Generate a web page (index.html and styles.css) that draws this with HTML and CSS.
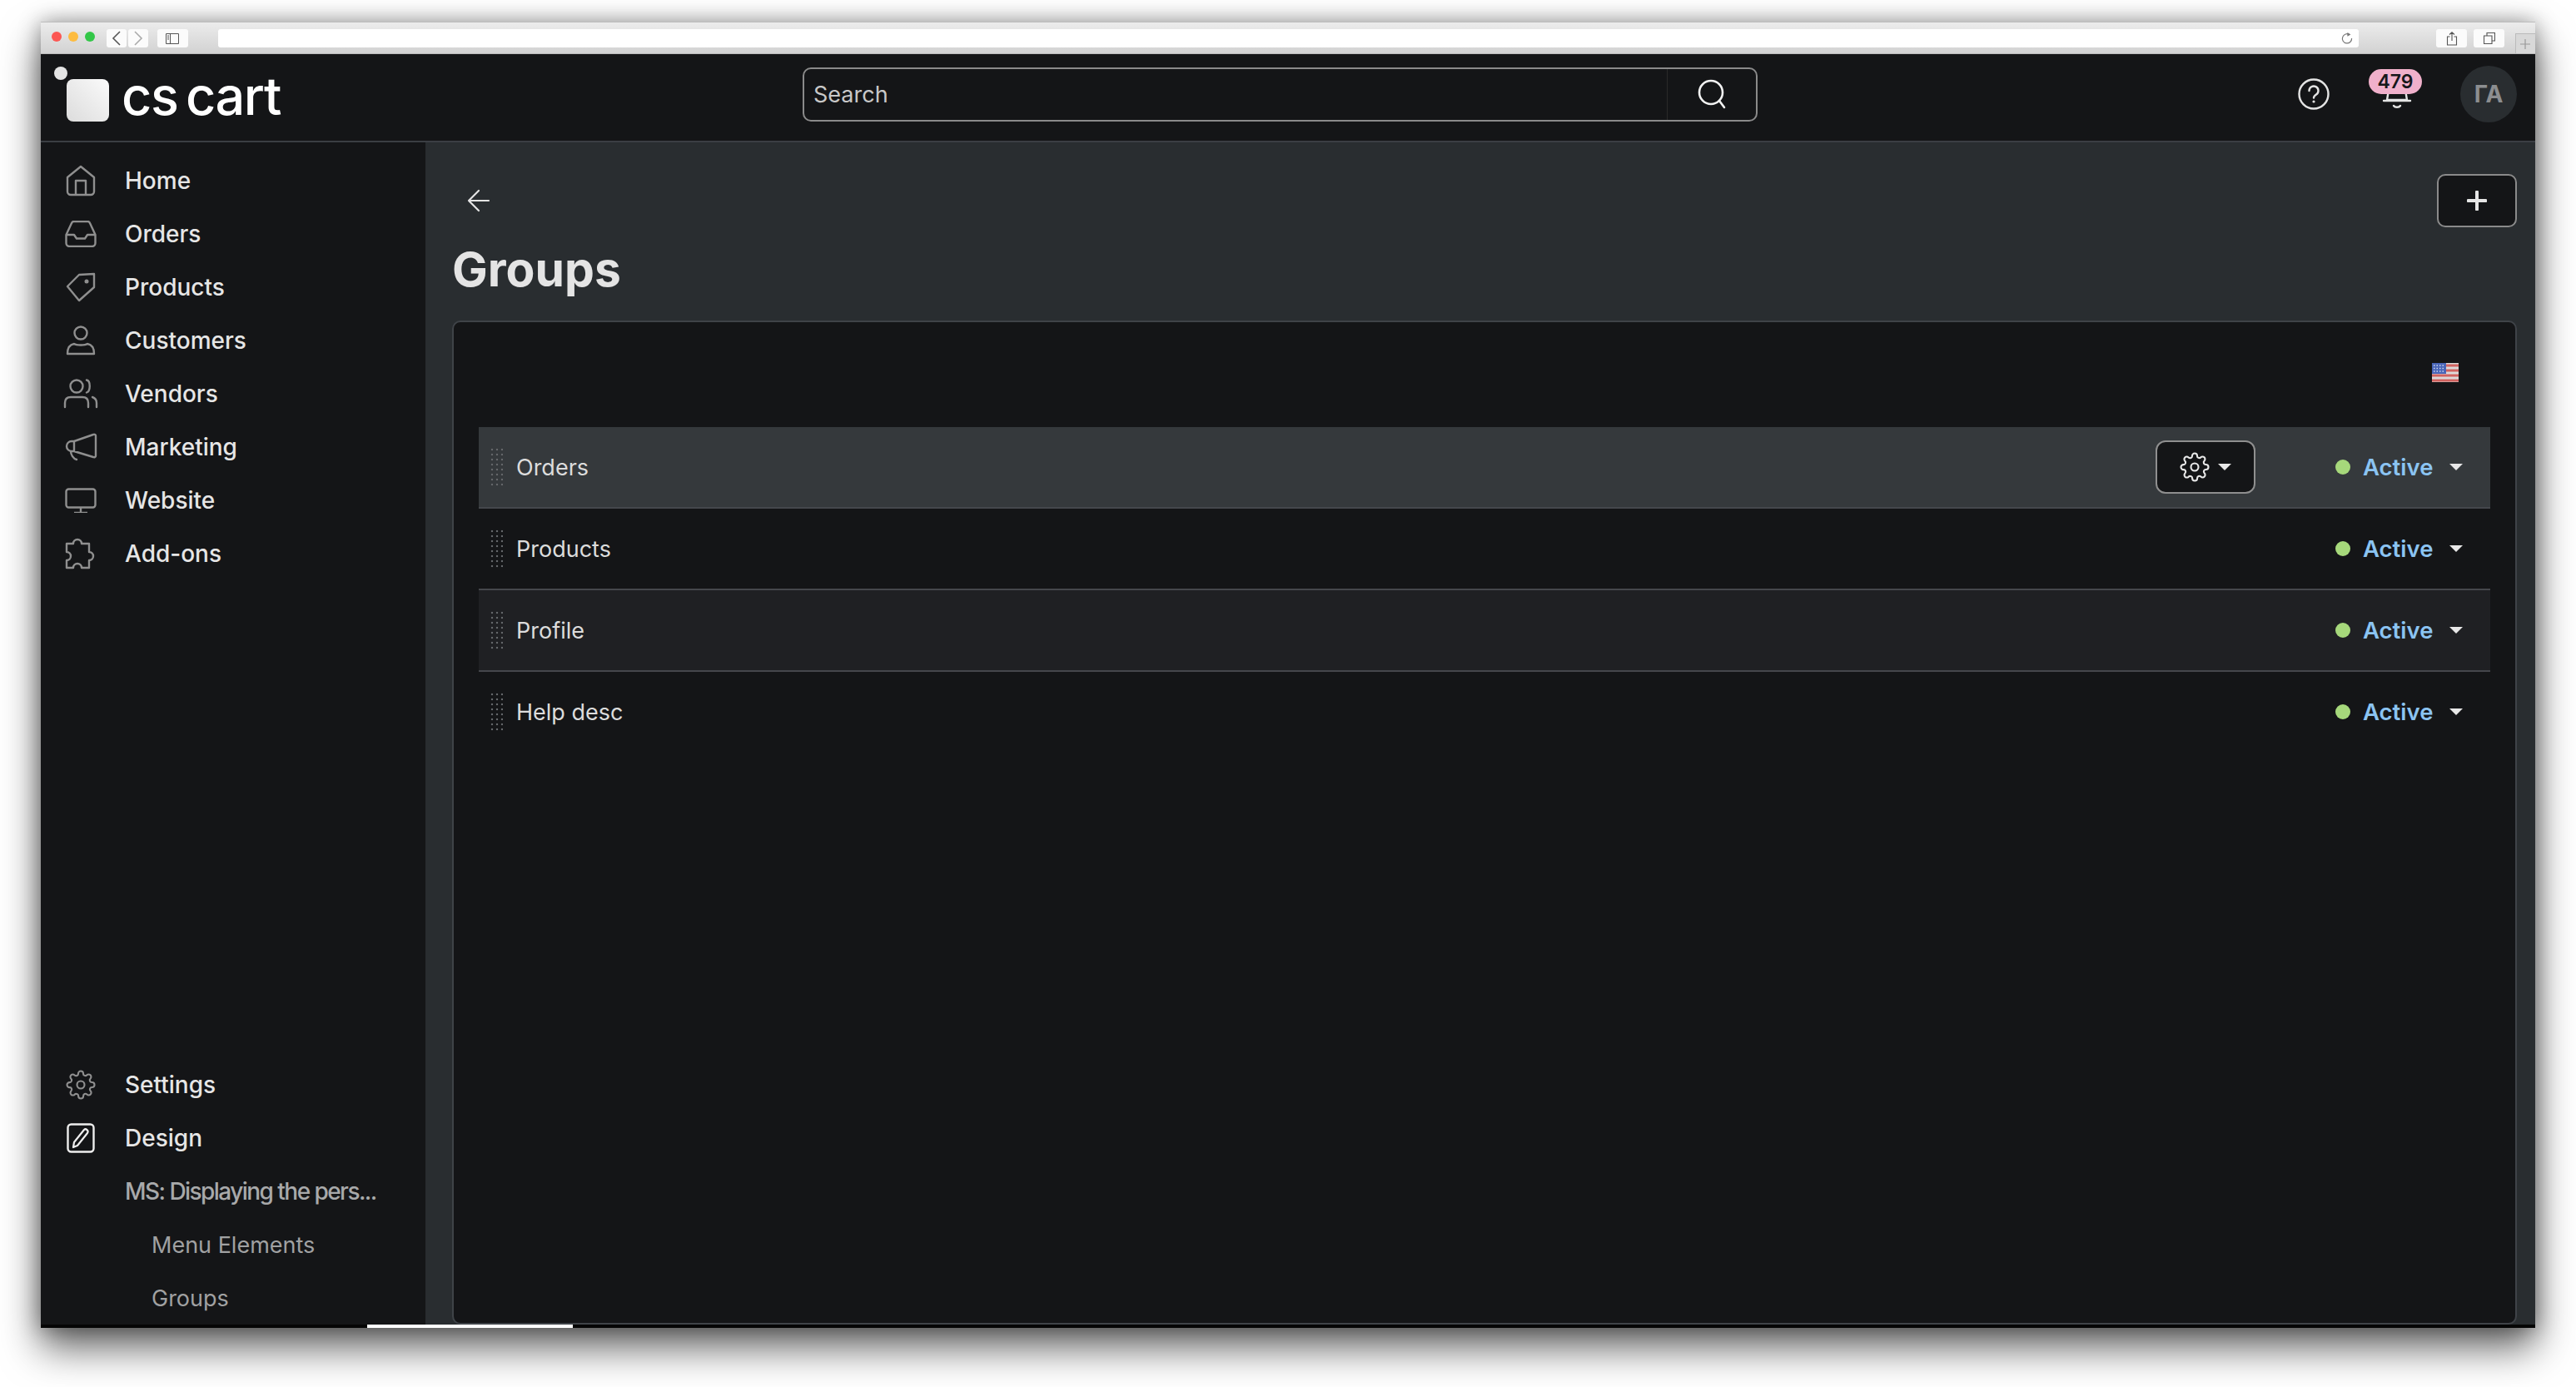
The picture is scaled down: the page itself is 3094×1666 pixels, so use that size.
FILE: index.html
```html
<!DOCTYPE html>
<html lang="en">
<head>
<meta charset="utf-8">
<title>Groups</title>
<link rel="stylesheet" href="styles.css">
</head>
<body>
<div class="window">
  <div class="toolbar">
    <div class="lights"><i class="light red"></i><i class="light yellow"></i><i class="light green"></i></div>
    <div class="navbtns">
      <span class="tbtn nav"><svg width="12" height="20" viewBox="0 0 12 20"><path d="M10 2 2 10l8 8" fill="none" stroke="#555" stroke-width="1.6"/></svg></span>
      <span class="tbtn nav"><svg width="12" height="20" viewBox="0 0 12 20"><path d="M2 2l8 8-8 8" fill="none" stroke="#aaa" stroke-width="1.6"/></svg></span>
    </div>
    <span class="tbtn side"><svg width="16" height="13" viewBox="0 0 16 13"><path d="M.5.5h15v12H.5zM5.5.5v12M2 3h2M2 5h2M2 7h2" fill="none" stroke="#555"/></svg></span>
    <div class="url"><svg width="14" height="14" viewBox="0 0 14 14"><path d="M10 2.6A5.6 5.6 0 1 0 12.6 7" fill="none" stroke="#777" stroke-width="1.2"/><path d="M7.4 0l4 2.6-4 2.2z" fill="#777"/></svg></div>
    <span class="tbtn tool"><svg width="14" height="17" viewBox="0 0 14 17"><path d="M4.5 6H1.500v10h11V6H9.500M7 11V1M4 3.500 7 .8l3 2.700" fill="none" stroke="#555" stroke-width="1.100"/></svg></span>
    <span class="tbtn tool"><svg width="14" height="14" viewBox="0 0 14 14"><path d="M.5 4h9.500v9.500H.5zM4 4V.5h9.500V10H10" fill="none" stroke="#555" stroke-width="1.100"/></svg></span>
    <span class="newtab"><svg width="12" height="12" viewBox="0 0 12 12"><path d="M6 0v12M0 6h12" stroke="#999" stroke-width="1.200"/></svg></span>
  </div>

  <header class="topbar">
    <div class="brand">
      <svg class="logo" width="62" height="62" viewBox="0 0 62 62"><defs><linearGradient id="lg" x1="1" y1="0" x2="0" y2="1"><stop offset="0" stop-color="#fafafa"/><stop offset="1" stop-color="#dcdcdc"/></linearGradient></defs><circle cx="8" cy="8" r="8" fill="#e4e4e4"/><rect x="15" y="15" width="51" height="51" rx="8" fill="url(#lg)"/></svg>
      <span class="wordmark">cs cart</span>
    </div>
    <div class="search">
      <span class="search-text">Search</span>
      <span class="search-btn"><svg width="36" height="36" viewBox="0 0 36 36"><circle cx="17" cy="16" r="14" fill="none" stroke="#f2f2f2" stroke-width="2.600"/><path d="m27 26 6 8" stroke="#f2f2f2" stroke-width="2.600" stroke-linecap="round"/></svg></span>
    </div>
    <div class="top-actions">
      <svg class="help" width="38" height="38" viewBox="0 0 38 38"><circle cx="19" cy="19" r="17.500" fill="none" stroke="#e4e4e4" stroke-width="2.400"/><path d="M13.500 15a5.500 5.500 0 1 1 8.500 4.600c-2 1.300-3 2-3 4" fill="none" stroke="#e4e4e4" stroke-width="2.400" stroke-linecap="round"/><circle cx="19" cy="28" r="1.600" fill="#e4e4e4"/></svg>
      <div class="bell">
        <svg width="36" height="38" viewBox="0 0 36 38"><path d="M9 8 6 26h24L27 8" fill="none" stroke="#e4e4e4" stroke-width="2.400"/><path d="M2 27h32" stroke="#e4e4e4" stroke-width="2.400" stroke-linecap="round"/><path d="M14 33c1.500 2.400 6.500 2.400 8 0" fill="none" stroke="#e4e4e4" stroke-width="2.400" stroke-linecap="round"/></svg>
        <span class="badge">479</span>
      </div>
      <span class="avatar">ГА</span>
    </div>
  </header>

  <div class="body">
    <aside class="sidebar">
      <nav class="nav-list">
        <a class="item"><span class="ico"><svg width="36" height="38" viewBox="0 0 36 38"><path d="M2 15 18 2l16 13v17a4 4 0 0 1-4 4H6a4 4 0 0 1-4-4zM12 36V19h12v17" fill="none" stroke="#8f8f8f" stroke-width="2.400" stroke-linejoin="round"/></svg></span>Home</a>
        <a class="item"><span class="ico"><svg width="38" height="32" viewBox="0 0 38 32"><path d="M1.500 17 8 3a3 3 0 0 1 3-2h16a3 3 0 0 1 3 2l6.500 14v10a4 4 0 0 1-4 4h-27a4 4 0 0 1-4-4z" fill="none" stroke="#8f8f8f" stroke-width="2.400" stroke-linejoin="round"/><path d="M1.500 17H11l3 4.500h10l3-4.500h9.500" fill="none" stroke="#8f8f8f" stroke-width="2.400" stroke-linejoin="round"/></svg></span>Orders</a>
        <a class="item"><span class="ico"><svg width="36" height="36" viewBox="0 0 36 36"><path d="M34 2v16L16 34 2 17 16 3z" fill="none" stroke="#8f8f8f" stroke-width="2.400" stroke-linejoin="round"/><circle cx="25" cy="11" r="2.500" fill="#8f8f8f"/></svg></span>Products</a>
        <a class="item"><span class="ico"><svg width="36" height="36" viewBox="0 0 36 36"><circle cx="18" cy="9" r="7.500" fill="none" stroke="#8f8f8f" stroke-width="2.400"/><path d="M2 34c0-7 2-11 8-12 3 2 13 2 16 0 6 1 8 5 8 12z" fill="none" stroke="#8f8f8f" stroke-width="2.400" stroke-linejoin="round"/></svg></span>Customers</a>
        <a class="item"><span class="ico"><svg width="42" height="36" viewBox="0 0 42 36"><circle cx="16" cy="9" r="7.500" fill="none" stroke="#8f8f8f" stroke-width="2.400"/><path d="M28 1.500c5 1 5 13 0 15M2 34v-5c0-5 3-7 7-7h14c4 0 7 2 7 7v5M35 22c3 1 5 3 5 7v5" fill="none" stroke="#8f8f8f" stroke-width="2.400" stroke-linecap="round"/></svg></span>Vendors</a>
        <a class="item"><span class="ico"><svg width="40" height="34" viewBox="0 0 40 34"><path d="M12 10 35 2a2 2 0 0 1 3 2v23a2 2 0 0 1-3 2L12 22zM12 10H9a6 6 0 0 0 0 12h3M8 22c0 4 3 9 7 10" fill="none" stroke="#8f8f8f" stroke-width="2.400" stroke-linejoin="round" stroke-linecap="round"/></svg></span>Marketing</a>
        <a class="item"><span class="ico"><svg width="38" height="30" viewBox="0 0 38 30"><rect x="1.500" y="1.500" width="35" height="22" rx="3" fill="none" stroke="#8f8f8f" stroke-width="2.400"/><path d="M11 30h16M19 24v6" stroke="#8f8f8f" stroke-width="2.400"/></svg></span>Website</a>
        <a class="item"><span class="ico"><svg width="38" height="38" viewBox="0 0 38 38"><path d="M2 7H10a5 5 0 1 1 10 0H29V17a5 5 0 1 1 0 10V36H20a5 5 0 1 0-10 0H2V27a5 5 0 1 0 0-10z" fill="none" stroke="#8f8f8f" stroke-width="2.400" stroke-linejoin="round"/></svg></span>Add-ons</a>
      </nav>
      <nav class="nav-list">
        <a class="item"><span class="ico"><svg width="36" height="36" viewBox="0 0 24 24" fill="none" stroke="#8f8f8f" stroke-width="1.400" stroke-linejoin="round"><circle cx="12" cy="12" r="3"/><path d="M19.4 15a1.650 1.650 0 0 0 .33 1.820l.06.06a2 2 0 0 1 0 2.830 2 2 0 0 1-2.830 0l-.06-.06a1.650 1.650 0 0 0-1.820-.33 1.650 1.650 0 0 0-1 1.510V21a2 2 0 0 1-2 2 2 2 0 0 1-2-2v-.09A1.650 1.650 0 0 0 9 19.400a1.650 1.650 0 0 0-1.820.33l-.06.06a2 2 0 0 1-2.830 0 2 2 0 0 1 0-2.830l.06-.06a1.650 1.650 0 0 0 .33-1.820 1.650 1.650 0 0 0-1.510-1H3a2 2 0 0 1-2-2 2 2 0 0 1 2-2h.09A1.650 1.650 0 0 0 4.600 9a1.650 1.650 0 0 0-.33-1.820l-.06-.06a2 2 0 0 1 0-2.830 2 2 0 0 1 2.830 0l.06.06a1.650 1.650 0 0 0 1.820.33H9a1.650 1.650 0 0 0 1-1.510V3a2 2 0 0 1 2-2 2 2 0 0 1 2 2v.09a1.650 1.650 0 0 0 1 1.510 1.650 1.650 0 0 0 1.820-.33l.06-.06a2 2 0 0 1 2.830 0 2 2 0 0 1 0 2.830l-.06.06a1.650 1.650 0 0 0-.33 1.820V9a1.650 1.650 0 0 0 1.510 1H21a2 2 0 0 1 2 2 2 2 0 0 1-2 2h-.09a1.650 1.650 0 0 0-1.510 1z"/></svg></span>Settings</a>
        <a class="item"><span class="ico"><svg width="34" height="36" viewBox="0 0 34 36"><rect x="1.500" y="1.500" width="31" height="33" rx="4" fill="none" stroke="#eee" stroke-width="2.400"/><path d="m8 29 1-6L21 8c2-2 6 1 4 4L13 27z" fill="none" stroke="#eee" stroke-width="2.200" stroke-linejoin="round"/></svg></span>Design</a>
        <a class="item sub">MS: Displaying the pers...</a>
        <a class="item subsub">Menu Elements</a>
        <a class="item subsub">Groups</a>
      </nav>
    </aside>

    <main class="main">
      <div class="titlebar">
        <div>
          <svg class="back" width="28" height="28" viewBox="0 0 28 28"><path d="M26 14H2M14 2 2 14l12 12" fill="none" stroke="#e4e4e4" stroke-width="2.200" stroke-linecap="round" stroke-linejoin="round"/></svg>
          <h1 class="title">Groups</h1>
        </div>
        <button class="add"><svg width="24" height="24" viewBox="0 0 24 24"><path d="M12 1.500v21M1.500 12h21" stroke="#e6e6e6" stroke-width="4" stroke-linecap="round"/></svg></button>
      </div>
      <section class="card">
        <div class="card-head"><svg class="flag" width="32" height="23" viewBox="0 0 32 23"><rect width="32" height="23" fill="#dcd8d8"/><path d="M0 3h32M0 9h32M0 15h32M0 21h32" stroke="#d2625f" stroke-width="3"/><rect width="17" height="13" fill="#4a66b8"/><path d="M2 3h13M2 6.500h13M2 10h13" stroke="#cfd8f0" stroke-width="1.500" stroke-dasharray="1.500 2"/></svg></div>
        <div class="row hover">
          <span class="grip"></span><span class="name">Orders</span>
          <button class="gearbtn"><svg width="36" height="36" viewBox="0 0 24 24" fill="none" stroke="#e8e8e8" stroke-width="1.400" stroke-linejoin="round"><circle cx="12" cy="12" r="3"/><path d="M19.4 15a1.650 1.650 0 0 0 .33 1.820l.06.06a2 2 0 0 1 0 2.830 2 2 0 0 1-2.830 0l-.06-.06a1.650 1.650 0 0 0-1.820-.33 1.650 1.650 0 0 0-1 1.510V21a2 2 0 0 1-2 2 2 2 0 0 1-2-2v-.09A1.650 1.650 0 0 0 9 19.400a1.650 1.650 0 0 0-1.820.33l-.06.06a2 2 0 0 1-2.830 0 2 2 0 0 1 0-2.830l.06-.06a1.650 1.650 0 0 0 .33-1.820 1.650 1.650 0 0 0-1.510-1H3a2 2 0 0 1-2-2 2 2 0 0 1 2-2h.09A1.650 1.650 0 0 0 4.600 9a1.650 1.650 0 0 0-.33-1.820l-.06-.06a2 2 0 0 1 0-2.830 2 2 0 0 1 2.830 0l.06.06a1.650 1.650 0 0 0 1.820.33H9a1.650 1.650 0 0 0 1-1.510V3a2 2 0 0 1 2-2 2 2 0 0 1 2 2v.09a1.650 1.650 0 0 0 1 1.510 1.650 1.650 0 0 0 1.820-.33l.06-.06a2 2 0 0 1 2.830 0 2 2 0 0 1 0 2.830l-.06.06a1.650 1.650 0 0 0-.33 1.820V9a1.650 1.650 0 0 0 1.510 1H21a2 2 0 0 1 2 2 2 2 0 0 1-2 2h-.09a1.650 1.650 0 0 0-1.510 1z"/></svg><i class="caret"></i></button>
          <span class="status"><i class="dot"></i><span class="label">Active</span><i class="caret"></i></span>
        </div>
        <div class="row">
          <span class="grip"></span><span class="name">Products</span>
          <span class="status"><i class="dot"></i><span class="label">Active</span><i class="caret"></i></span>
        </div>
        <div class="row alt">
          <span class="grip"></span><span class="name">Profile</span>
          <span class="status"><i class="dot"></i><span class="label">Active</span><i class="caret"></i></span>
        </div>
        <div class="row last">
          <span class="grip"></span><span class="name">Help desc</span>
          <span class="status"><i class="dot"></i><span class="label">Active</span><i class="caret"></i></span>
        </div>
      </section>
    </main>
  </div>
  <div class="hscroll"><span class="thumb"></span></div>
</div>
</body>
</html>
```
FILE: styles.css
```css
* { box-sizing: border-box; }
html, body { margin: 0; height: 100%; background: #fff; overflow: hidden; }
body { padding: 26px 49px 0; font-family: Inter, "Liberation Sans", sans-serif; }

.window {
  width: 2996px; height: 1569px; display: flex; flex-direction: column;
  background: #141517;
  box-shadow: 0 24px 44px rgba(0,0,0,.6), 0 0 24px rgba(0,0,0,.35);
}

.toolbar {
  height: 39px; flex: none; display: flex; align-items: flex-start; padding-top: 8px;
  background: linear-gradient(#ececec, #d2d2d2);
  border-top: 1px solid #bdbdbd; border-bottom: 1px solid #bbb;
}
.lights { display: flex; gap: 8px; margin: 3px 0 0 13px; }
.light { width: 12px; height: 12px; border-radius: 50%; }
.red { background: #fc5753; } .yellow { background: #fdbc40; } .green { background: #33c748; }
.tbtn { height: 22px; background: #fbfbfb; border-radius: 3px; display: flex; align-items: center; justify-content: center; }
.navbtns { display: flex; gap: 2px; margin-left: 14px; }
.nav { width: 24px; }
.side { width: 37px; margin-left: 11px; }
.url { width: 2572px; height: 22px; margin: 0 93px 0 36px; background: #fff; border-radius: 3px; display: flex; align-items: center; justify-content: flex-end; padding-right: 7px; }
.tool { width: 37px; margin-right: 8px; }
.newtab { width: 24px; height: 24px; margin: 5px 0 0 5px; border: 1px solid #bbb; border-right: 0; border-bottom: 0; display: flex; align-items: center; justify-content: center; background: #d8d8d8; }

.topbar { height: 106px; flex: none; display: flex; align-items: center; padding-bottom: 8px; border-bottom: 2px solid #3b3e43; }
.brand { width: 462px; align-self: flex-start; display: flex; align-items: flex-start; padding: 15px 0 0 16px; }
.logo { overflow: visible; margin-right: 19px; flex: none; }
.wordmark { font-size: 63px; line-height: 60px; color: #fff; font-weight: 500; letter-spacing: -1.4px; word-spacing: -6px; margin-top: 5px; white-space: nowrap; }
.search { width: 1147px; height: 65px; margin-left: 453px; border: 2px solid #8a8a8a; border-radius: 10px; display: flex; align-items: center; }
.search-text { flex: 1; padding-left: 11px; font-size: 27px; color: #c8c8c8; }
.search-btn { width: 107px; height: 100%; border-left: 1px solid #2a2a2a; display: flex; align-items: center; justify-content: center; }
.top-actions { flex: 1; display: flex; align-items: center; justify-content: flex-end; }
.help { margin-right: 63px; }
.bell { position: relative; width: 36px; height: 38px; margin-right: 58px; }
.bell svg { display: block; }
.badge { position: absolute; left: -16px; top: -11px; width: 64px; height: 30px; border-radius: 15px; background: #f0b0cb; color: #16171a; font-size: 23px; line-height: 30px; font-weight: 600; text-align: center; }
.avatar { width: 68px; height: 68px; margin-right: 22px; border-radius: 50%; background: #292d30; color: #8c8e90; font-size: 28px; font-weight: 700; display: flex; align-items: center; justify-content: center; }

.body { flex: 1; min-height: 0; display: flex; }
.sidebar { width: 462px; flex: none; display: flex; flex-direction: column; justify-content: space-between; padding: 14px 0 0; overflow: hidden; }
.nav-list { display: flex; flex-direction: column; }
.item { height: 64px; flex: none; display: flex; align-items: center; padding-left: 101px; font-size: 28px; font-weight: 500; color: #e6e6e6; position: relative; white-space: nowrap; }
.ico { position: absolute; left: 0; top: 0; width: 96px; height: 100%; display: flex; align-items: center; justify-content: center; }
.sub { color: #a8a9aa; letter-spacing: -1.55px; }
.subsub { color: #a0a1a2; font-weight: 400; font-size: 27px; padding-left: 133px; }

.main { flex: 1; min-width: 0; background: #292d30; padding: 0 22px 0 32px; display: flex; flex-direction: column; }
.titlebar { display: flex; justify-content: space-between; align-items: flex-start; padding-top: 38px; height: 214px; flex: none; }
.back { display: block; margin: 18px 0 0 18px; }
.title { margin: 34px 0 0; font-size: 57px; line-height: 70px; font-weight: 700; color: #e4e4e4; }
.add { width: 96px; height: 64px; border: 2px solid #8a8a8a; border-radius: 10px; background: #141517; display: flex; align-items: center; justify-content: center; padding: 0; }
.card { flex: 1; background: #141517; border: 2px solid #3f4348; border-radius: 10px; padding: 0 30px; }
.card-head { height: 126px; display: flex; justify-content: flex-end; padding: 49px 38px 0 0; }
.flag { display: block; }
.row { height: 98px; display: flex; align-items: center; border-bottom: 2px solid #45474c; padding-left: 14px; }
.row.last { border-bottom-color: transparent; }
.row.hover { background: #35393c; }
.row.alt { background: #1f2023; }
.grip { width: 15px; height: 48px; margin-right: 16px; background-image: radial-gradient(circle, #64676a 1.3px, transparent 1.6px); background-size: 6px 6px; background-position: -1px 0; }
.name { flex: 1; font-size: 27px; color: #dcdcdc; }
.gearbtn { width: 120px; height: 64px; margin-right: 96px; border: 2px solid #8f8f8f; border-radius: 12px; background: #141517; display: flex; align-items: center; justify-content: center; gap: 10px; padding: 0; }
.status { width: 186px; display: flex; align-items: center; }
.dot { width: 18px; height: 18px; border-radius: 50%; background: #a6d87b; }
.label { margin-left: 15px; font-size: 27.500px; font-weight: 600; color: #8bc4f2; }
.caret { width: 0; height: 0; border-left: 8px solid transparent; border-right: 8px solid transparent; border-top: 8px solid #e8e8e8; }
.status .caret { margin-left: 20px; }
.hscroll { height: 4px; flex: none; background: #050505; }
.thumb { display: block; width: 247px; height: 4px; margin-left: 392px; background: #fff; }
```
